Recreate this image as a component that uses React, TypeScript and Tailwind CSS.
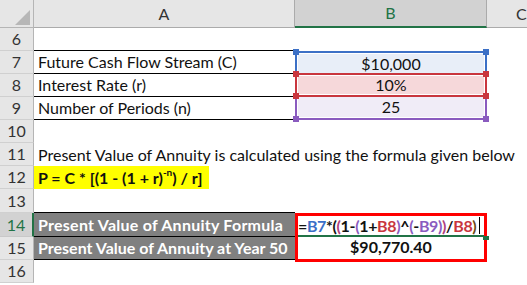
import React from 'react';

// reference colours of the formula ranges
const BLUE = 'border-[#3c70c6]';

function RowHead({ n, active }: { n: number; active?: boolean }) {
  return (
    <div
      className={
        active
          ? 'w-[34px] shrink-0 flex items-center justify-center bg-[#d2d2d2] text-[#217346] border-b border-[#c8c8c8] border-r-2 border-r-[#217346]'
          : 'w-[34px] shrink-0 flex items-center justify-center bg-[#e6e6e6] text-[#333] border-b border-[#d0d0d0] border-r border-r-[#b5b5b5]'
      }
    >
      {n}
    </div>
  );
}

function Handle({ pos, color }: { pos: string; color: string }) {
  return <div className={`absolute w-[6px] h-[6px] ${pos} ${color} z-10`} />;
}

export default function App() {
  return (
    <div className="w-[527px] h-[285px] overflow-hidden bg-white text-[16px] leading-none text-[#111] font-['Lato','Liberation_Sans',sans-serif]">
      {/* column headers */}
      <div className="flex h-[28px]">
        <div className="w-[34px] shrink-0 bg-[#e6e6e6] border-b border-r border-[#b5b5b5] relative">
          <svg className="absolute left-[15px] top-[10px]" width="15" height="15" viewBox="0 0 15 15">
            <polygon points="15,0 15,15 0,15" fill="#b7b7b7" />
          </svg>
        </div>
        <div className="w-[261px] shrink-0 bg-[#e6e6e6] border-b border-r border-[#ababab] flex items-center justify-center text-[#333]">
          A
        </div>
        <div className="w-[192px] shrink-0 bg-[#d2d2d2] border-b-2 border-[#217346] border-r border-r-[#ababab] flex items-center justify-center text-[#217346]">
          B
        </div>
        <div className="flex-1 bg-[#e6e6e6] border-b border-[#ababab] flex items-center pl-[29px] text-[#333]">
          C
        </div>
      </div>

      {/* row 6 */}
      <div className="flex h-[23px]">
        <RowHead n={6} />
        <div className="w-[261px] shrink-0 border-b border-black" />
        <div className="w-[192px] shrink-0" />
        <div className="flex-1" />
      </div>

      {/* row 7 */}
      <div className="flex h-[23px]">
        <RowHead n={7} />
        <div className="w-[261px] shrink-0 border-b border-black flex items-center pl-[4px]">
          Future Cash Flow Stream (C)
        </div>
        <div className={`w-[192px] shrink-0 relative border-t-2 border-x-2 ${BLUE} bg-white px-px pt-px`}>
          <Handle pos="-left-[4px] -top-[4px]" color="bg-[#3c70c6]" />
          <Handle pos="-right-[4px] -top-[4px]" color="bg-[#3c70c6]" />
          <div className="h-full bg-[#e8eef8] flex items-center justify-center">$10,000</div>
        </div>
        <div className="flex-1" />
      </div>

      {/* row 8 */}
      <div className="flex h-[23px]">
        <RowHead n={8} />
        <div className="w-[261px] shrink-0 border-b border-black flex items-center pl-[4px]">
          Interest Rate (r)
        </div>
        <div className="w-[192px] shrink-0 relative border-2 border-[#c9363e] bg-white p-px -mt-px h-[24px]">
          <Handle pos="-left-[4px] -top-[4px]" color="bg-[#c9363e]" />
          <Handle pos="-right-[4px] -top-[4px]" color="bg-[#c9363e]" />
          <Handle pos="-left-[4px] -bottom-[4px]" color="bg-[#c9363e]" />
          <Handle pos="-right-[4px] -bottom-[4px]" color="bg-[#c9363e]" />
          <div className="h-full bg-[#f6d8da] flex items-center justify-center">10%</div>
        </div>
        <div className="flex-1" />
      </div>

      {/* row 9 */}
      <div className="flex h-[23px]">
        <RowHead n={9} />
        <div className="w-[261px] shrink-0 border-b border-black flex items-center pl-[4px]">
          Number of Periods (n)
        </div>
        <div className="w-[192px] shrink-0 relative border-b-2 border-x-2 border-[#8a5bbf] bg-white px-px pb-px">
          <Handle pos="-left-[4px] -bottom-[4px]" color="bg-[#8a5bbf]" />
          <Handle pos="-right-[4px] -bottom-[4px]" color="bg-[#8a5bbf]" />
          <div className="h-full bg-[#f0ecf7] flex items-center justify-center">25</div>
        </div>
        <div className="flex-1" />
      </div>

      {/* row 10 */}
      <div className="flex h-[23px]">
        <RowHead n={10} />
        <div className="flex-1" />
      </div>

      {/* row 11 */}
      <div className="flex h-[23px]">
        <RowHead n={11} />
        <div className="flex-1 flex items-center pl-[4px] whitespace-nowrap">
          Present Value of Annuity is calculated using the formula given below
        </div>
      </div>

      {/* row 12 */}
      <div className="flex h-[23px]">
        <RowHead n={12} />
        <div className="flex-1 flex items-center">
          <div className="h-full bg-[#ffff00] flex items-center pl-[4px] pr-[7px] font-bold whitespace-nowrap">
            P = C * [(1 - (1 + r)<sup className="text-[10px] -top-[6px]">-n</sup>) / r]
          </div>
        </div>
      </div>

      {/* row 13 */}
      <div className="flex h-[24px]">
        <RowHead n={13} />
        <div className="w-[261px] shrink-0 border-b border-black" />
        <div className="flex-1" />
      </div>

      {/* row 14 */}
      <div className="flex h-[24px]">
        <RowHead n={14} active />
        <div className="w-[261px] shrink-0 bg-[#808080] border-b border-black text-white font-bold flex items-center pl-[4px] whitespace-nowrap tracking-[0.25px]">
          Present Value of Annuity Formula
        </div>
        <div className="w-[192px] shrink-0 relative border-t-[3px] border-x-[3px] border-[#ff0000]">
          <div className="h-full border-b-2 border-[#217346] flex items-center pl-0 font-bold whitespace-nowrap tracking-[-0.35px]">
            <span>=</span>
            <span className="text-[#3a6fc8]">B7</span>
            <span>*(</span>
            <span className="text-[#b0407c]">(</span>
            <span>1-</span>
            <span className="text-[#8a5bbf]">(</span>
            <span>1+</span>
            <span className="text-[#c9363e]">B8</span>
            <span className="text-[#8a5bbf]">)</span>
            <span>^</span>
            <span className="text-[#8a5bbf]">(</span>
            <span>-</span>
            <span className="text-[#8a5bbf]">B9</span>
            <span className="text-[#8a5bbf]">)</span>
            <span className="text-[#b0407c]">)</span>
            <span>/</span>
            <span className="text-[#c9363e]">B8</span>
            <span className="text-[#6b4a12]">)</span>
            <span className="ml-[3px] w-px h-[17px] bg-black" />
          </div>
          <div className="absolute -right-[5px] bottom-[-3px] w-[6px] h-[4px] bg-[#217346]" />
        </div>
        <div className="flex-1" />
      </div>

      {/* row 15 */}
      <div className="flex h-[23px]">
        <RowHead n={15} />
        <div className="w-[261px] shrink-0 bg-[#808080] border-b border-black text-white font-bold flex items-center pl-[4px] whitespace-nowrap">
          Present Value of Annuity at Year 50
        </div>
        <div className="w-[192px] shrink-0 h-[25px] border-b-[3px] border-x-[3px] border-[#ff0000] font-bold flex items-center justify-center pb-[2px]">
          $90,770.40
        </div>
        <div className="flex-1" />
      </div>

      {/* row 16 */}
      <div className="flex h-[23px]">
        <RowHead n={16} />
        <div className="flex-1" />
      </div>
    </div>
  );
}
